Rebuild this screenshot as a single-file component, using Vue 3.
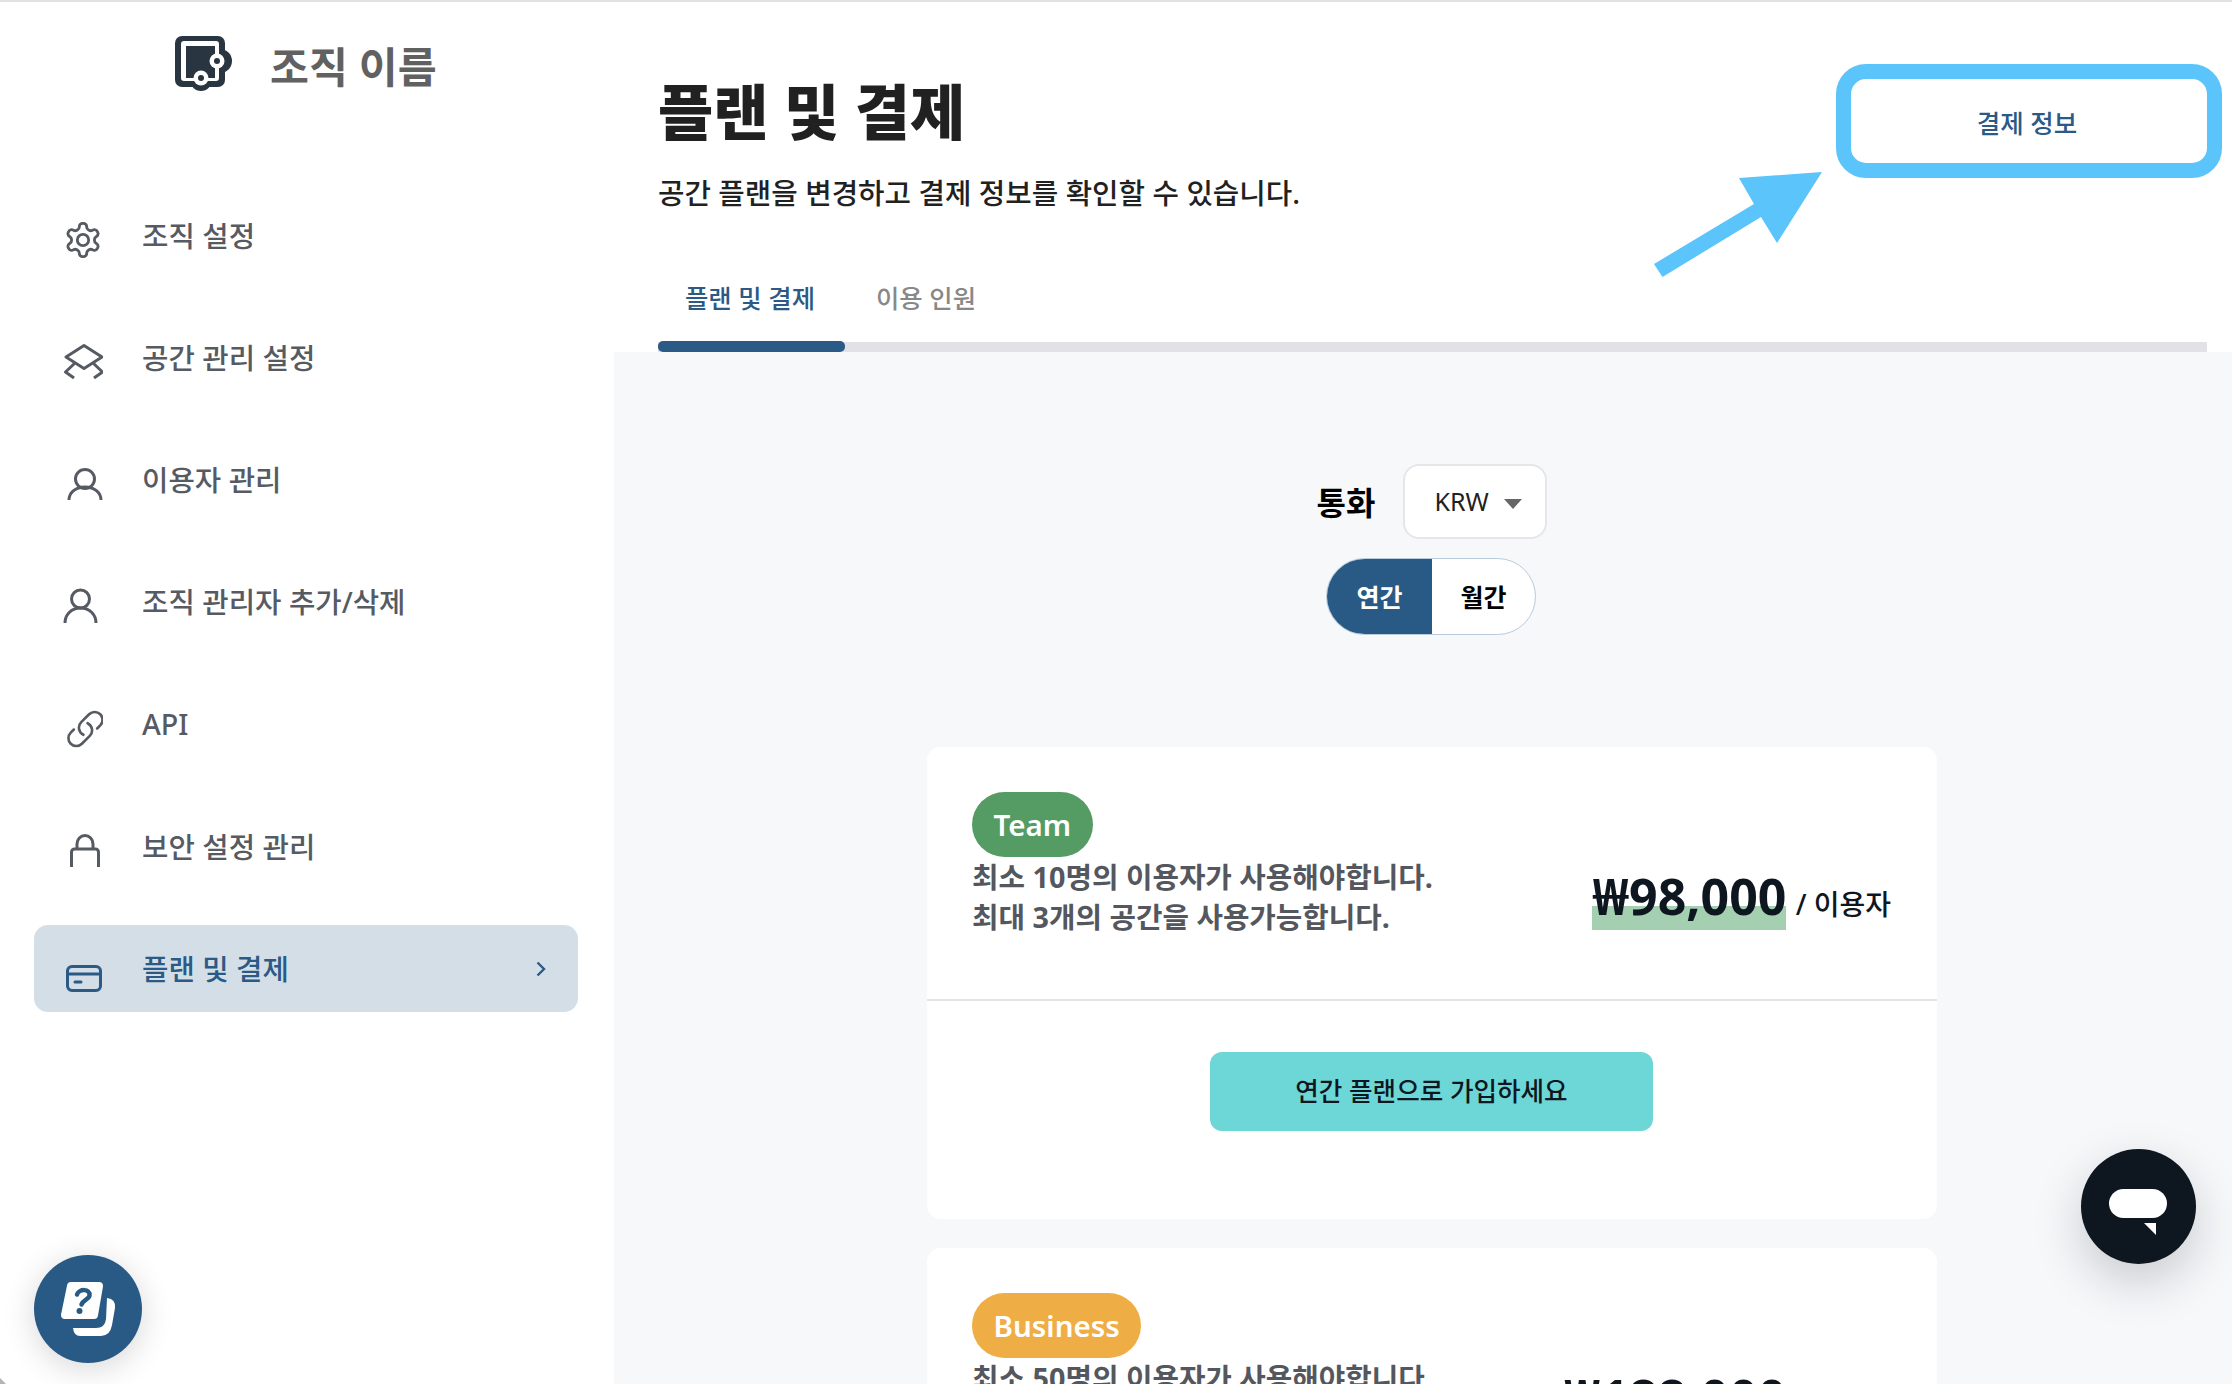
<template>
  <div class="page">
    <aside class="sidebar">
      <div class="org">
        <svg class="org-logo" width="60" height="58" viewBox="0 0 60 58">
          <rect x="1" y="1" width="50" height="51" rx="7" fill="#2a3542" />
          <circle cx="46" cy="26" r="12" fill="#2a3542" />
          <circle cx="27" cy="45" r="11" fill="#2a3542" />
          <rect x="7" y="6" width="38" height="40" rx="3" fill="#fff" />
          <rect x="12" y="11" width="29" height="32" fill="#2a3542" />
          <circle cx="43" cy="26" r="7.500" fill="#fff" />
          <circle cx="43" cy="26" r="3" fill="#2a3542" />
          <circle cx="27" cy="43" r="7.500" fill="#fff" />
          <circle cx="27" cy="43" r="3" fill="#2a3542" />
        </svg>
        <span class="org-name">조직 이름</span>
      </div>

      <nav class="nav">
        <a
          v-for="item in navItems"
          :key="item.label"
          class="nav-item"
          :class="{ active: item.active }"
        >
          <svg class="nav-icon" width="40" height="40" viewBox="0 0 40 40" fill="none" stroke="currentColor" stroke-width="3" stroke-linecap="round" stroke-linejoin="round">
            <g v-if="item.icon === 'gear'" transform="scale(1.667)" stroke-width="1.7">
              <path d="M12.22 2h-.44a2 2 0 0 0-2 2v.18a2 2 0 0 1-1 1.73l-.43.25a2 2 0 0 1-2 0l-.15-.08a2 2 0 0 0-2.73.73l-.22.38a2 2 0 0 0 .73 2.73l.15.1a2 2 0 0 1 1 1.72v.51a2 2 0 0 1-1 1.74l-.15.09a2 2 0 0 0-.73 2.73l.22.38a2 2 0 0 0 2.73.73l.15-.08a2 2 0 0 1 2 0l.43.25a2 2 0 0 1 1 1.73V20a2 2 0 0 0 2 2h.44a2 2 0 0 0 2-2v-.18a2 2 0 0 1 1-1.73l.43-.25a2 2 0 0 1 2 0l.15.08a2 2 0 0 0 2.73-.73l.22-.39a2 2 0 0 0-.73-2.73l-.15-.08a2 2 0 0 1-1-1.74v-.5a2 2 0 0 1 1-1.74l.15-.09a2 2 0 0 0 .73-2.73l-.22-.38a2 2 0 0 0-2.73-.73l-.15.08a2 2 0 0 1-2 0l-.43-.25a2 2 0 0 1-1-1.73V4a2 2 0 0 0-2-2z" />
              <circle cx="12" cy="12" r="3.400" />
            </g>
            <g v-else-if="item.icon === 'layers'">
              <path d="M21 3.500 39 15 21 26.500 3 15Z" />
              <path d="M12 21 2.500 30 11 36M30 21 39.500 30 31 36" stroke-linecap="butt" />
            </g>
            <g v-else-if="item.icon === 'user'" stroke-linecap="butt">
              <circle cx="22" cy="14" r="9.500" />
              <path d="M6 35C6 28 12 22 22 22S38 28 38 35" />
            </g>
            <g v-else-if="item.icon === 'admin'" stroke-linecap="butt">
              <circle cx="17.500" cy="12" r="9" />
              <path d="M2 36C2 28 8 21 17.500 21S33 28 33 36" />
            </g>
            <g v-else-if="item.icon === 'link'" transform="translate(1.500 -1) scale(1.75)" stroke-width="1.500">
              <path d="M13.190 8.688a4.500 4.500 0 0 1 1.242 7.244l-4.500 4.500a4.500 4.500 0 0 1-6.364-6.364l1.757-1.757m13.350-.622 1.757-1.757a4.500 4.500 0 0 0-6.364-6.364l-4.500 4.500a4.500 4.500 0 0 0 1.242 7.244" />
            </g>
            <g v-else-if="item.icon === 'lock'" stroke-linecap="butt">
              <path d="M8.500 36V21a3 3 0 0 1 3-3h21a3 3 0 0 1 3 3v15" />
              <path d="M14 18v-5a8 8.500 0 0 1 16 0v5" />
            </g>
            <g v-else-if="item.icon === 'card'">
              <rect x="4.500" y="12.500" width="33" height="24" rx="4.500" />
              <path d="M4.500 20h33M12 28h6" />
            </g>
          </svg>
          <span class="nav-label">{{ item.label }}</span>
          <svg v-if="item.active" class="nav-chevron" width="10" height="16" viewBox="0 0 10 16" fill="none" stroke="currentColor" stroke-width="2.400">
            <path d="M1.500 1.500 8 8l-6.500 6.500" />
          </svg>
        </a>
      </nav>

      <button type="button" class="help-btn">
        <svg width="108" height="108" viewBox="0 0 108 108">
          <path d="M37 31H65L60 60H31Z" fill="#fff" stroke="#fff" stroke-width="8" stroke-linejoin="round" />
          <path d="M73 43Q82 44 81 53L78 70Q76 81 67 81H46Q40 81 39 73H62Q71 73 72 64Z" fill="#fff" />
          <path d="M43 39.500C45 33.500 56.500 33.500 55.500 40.500C55 44.500 49 44.500 47.500 49.500" fill="none" stroke="#295a85" stroke-width="4.500" stroke-linecap="round" />
          <circle cx="45.500" cy="56" r="3" fill="#295a85" />
        </svg>
      </button>
    </aside>

    <main class="main">
      <header class="main-head">
        <div class="head-row">
          <div class="head-text">
            <h1>플랜 및 결제</h1>
            <p>공간 플랜을 변경하고 결제 정보를 확인할 수 있습니다.</p>
          </div>
          <button type="button" class="billing-btn">결제 정보</button>
          <svg class="pointer-arrow" width="180" height="120" viewBox="0 0 180 120">
            <path d="M172 10 89 16 104 42 4 102 12.500 115 111 55 127 81Z" fill="#5bc4fb" />
          </svg>
        </div>
        <div class="tabs">
          <a class="tab active">플랜 및 결제</a>
          <a class="tab">이용 인원</a>
        </div>
      </header>

      <section class="content">
        <div class="currency-row">
          <span class="currency-label">통화</span>
          <div class="currency-select">
            <span>KRW</span>
            <i class="caret"></i>
          </div>
        </div>
        <div class="period-toggle">
          <span class="period on">연간</span>
          <span class="period">월간</span>
        </div>

        <article v-for="plan in plans" :key="plan.name" class="plan-card">
          <div class="plan-top">
            <div class="plan-info">
              <span class="plan-badge" :class="plan.badgeClass">{{ plan.name }}</span>
              <p>{{ plan.minUsers }}</p>
              <p>{{ plan.spaces }}</p>
            </div>
            <div class="plan-price">
              <span class="amount" :class="plan.badgeClass">{{ plan.price }}</span>
              <span class="per"> / 이용자</span>
            </div>
          </div>
          <div class="plan-bottom">
            <button type="button" class="join-btn">연간 플랜으로 가입하세요</button>
          </div>
        </article>
      </section>
    </main>

    <button type="button" class="chat-btn">
      <svg width="115" height="115" viewBox="0 0 115 115">
        <rect x="28" y="40" width="58" height="29" rx="14.500" fill="#fff" />
        <path d="M63 74H75V86Z" fill="#fff" />
      </svg>
    </button>
  </div>
</template>

<script setup>
const navItems = [
  { label: '조직 설정', icon: 'gear' },
  { label: '공간 관리 설정', icon: 'layers' },
  { label: '이용자 관리', icon: 'user' },
  { label: '조직 관리자 추가/삭제', icon: 'admin' },
  { label: 'API', icon: 'link' },
  { label: '보안 설정 관리', icon: 'lock' },
  { label: '플랜 및 결제', icon: 'card', active: true },
]

const plans = [
  {
    name: 'Team',
    badgeClass: 'team',
    minUsers: '최소 10명의 이용자가 사용해야합니다.',
    spaces: '최대 3개의 공간을 사용가능합니다.',
    price: '₩98,000',
  },
  {
    name: 'Business',
    badgeClass: 'business',
    minUsers: '최소 50명의 이용자가 사용해야합니다.',
    spaces: '최대 10개의 공간을 사용가능합니다.',
    price: '₩188,000',
  },
]
</script>

<style>
html,
body {
  margin: 0;
  background: #fff;
}
</style>

<style scoped>
.page {
  position: relative;
  display: flex;
  width: 2232px;
  height: 1384px;
  overflow: hidden;
  box-sizing: border-box;
  border-top: 2px solid #e2e2e2;
  background: #fff;
  font-family: "Noto Sans", "Noto Sans CJK KR", sans-serif;
}

.page::after {
  content: "";
  position: absolute;
  left: 0;
  bottom: 0;
  width: 0;
  height: 0;
  border-left: 6px solid #b4b4b4;
  border-top: 6px solid transparent;
}

.sidebar {
  position: relative;
  flex: 0 0 614px;
  box-sizing: border-box;
  padding: 0 36px 0 34px;
}

.org {
  display: flex;
  align-items: center;
  gap: 36px;
  height: 56px;
  margin-top: 34px;
  padding-left: 140px;
}

.org-name {
  font-size: 42.300px;
  font-weight: 700;
  color: #616161;
}

.nav {
  display: flex;
  flex-direction: column;
  gap: 35.300px;
  margin-top: 99.500px;
}

.nav-item {
  display: flex;
  align-items: center;
  height: 87px;
  box-sizing: border-box;
  padding: 0 32px 0 29px;
  border-radius: 14px;
  color: #565a62;
}

.nav-item.active {
  background: #d4dee7;
  color: #2a5a85;
}

.nav-icon {
  flex: none;
  margin-top: 10px;
  margin-right: 39px;
}

.nav-label {
  flex: 1;
  margin-top: -2px;
  font-size: 28.700px;
  font-weight: 500;
}

.help-btn {
  position: absolute;
  left: 34px;
  top: 1253px;
  width: 108px;
  height: 108px;
  padding: 0;
  border: 0;
  border-radius: 50%;
  background: #295a85;
  box-shadow: 0 6px 32px rgba(0, 0, 0, 0.16);
}

.help-btn svg {
  display: block;
}

.main {
  flex: 1;
  display: flex;
  flex-direction: column;
  min-width: 0;
}

.main-head {
  padding: 0 25px 0 44px;
}

.head-row {
  position: relative;
  display: flex;
  justify-content: space-between;
  align-items: flex-start;
  height: 265px;
}

h1 {
  margin: 65px 0 0;
  font-size: 60px;
  line-height: 90px;
  font-weight: 900;
  color: #212121;
}

.head-text p {
  margin: 15px 0 0;
  font-size: 28.750px;
  line-height: 42px;
  font-weight: 500;
  color: #212121;
}

.billing-btn {
  width: 386px;
  height: 114px;
  margin: 62px -15px 0 0;
  padding: 0 4px 0 0;
  border: 15px solid #5bc4fb;
  border-radius: 30px;
  background: #fff;
  font-family: inherit;
  font-size: 25.500px;
  font-weight: 500;
  color: #2a5a85;
}

.pointer-arrow {
  position: absolute;
  right: 377px;
  top: 160px;
}

.tabs {
  display: flex;
  height: 85px;
  align-items: flex-start;
  gap: 61px;
  padding: 9px 0 0 27px;
  box-sizing: border-box;
  border-bottom: 10px solid #e2e2e6;
  position: relative;
}

.tab {
  font-size: 25.400px;
  line-height: 44px;
  font-weight: 500;
  color: #888;
}

.tab.active {
  color: #2a5a85;
}

.tab.active::after {
  content: "";
  position: absolute;
  left: 0;
  bottom: -10px;
  width: 187px;
  height: 11px;
  border-radius: 5px;
  background: #2a5a85;
}

.content {
  flex: 1;
  background: #f7f8fa;
  display: flex;
  flex-direction: column;
  align-items: center;
  padding: 112px 0 0 18px;
}

.currency-row {
  display: flex;
  align-items: center;
  gap: 28px;
}

.currency-label {
  padding-bottom: 2px;
  font-size: 32px;
  font-weight: 700;
  color: #000;
}

.currency-select {
  display: flex;
  align-items: center;
  justify-content: space-between;
  width: 144px;
  height: 75px;
  box-sizing: border-box;
  padding: 0 23px 2px 29px;
  border: 2px solid #e6e6ea;
  border-radius: 16px;
  background: #fff;
  font-size: 25px;
  color: #212121;
}

.caret {
  width: 0;
  height: 0;
  border-left: 9px solid transparent;
  border-right: 9px solid transparent;
  border-top: 10px solid #666;
  margin-top: 6px;
}

.period-toggle {
  display: flex;
  width: 210px;
  height: 77px;
  margin: 19px 2px 0 0;
  box-sizing: border-box;
  border: 1.500px solid #b8cbdd;
  border-radius: 39px;
  background: #fff;
  overflow: hidden;
}

.period {
  flex: 1;
  display: flex;
  align-items: center;
  justify-content: center;
  padding-bottom: 2px;
  font-size: 25px;
  font-weight: 600;
  color: #000;
}

.period.on {
  flex: 0 0 105px;
  background: #295a85;
  color: #fff;
}

.plan-card {
  flex: none;
  width: 1010px;
  height: 472px;
  margin-top: 112px;
  border-radius: 14px;
  background: #fff;
}

.plan-card + .plan-card {
  margin-top: 29px;
}

.plan-top {
  display: flex;
  justify-content: space-between;
  height: 254px;
  box-sizing: border-box;
  padding: 45px 46px 0 45px;
  border-bottom: 2px solid #e4e4e8;
}

.plan-info p {
  margin: 0;
  font-size: 28.800px;
  line-height: 40px;
  font-weight: 700;
  color: #54575e;
}

.plan-badge {
  display: block;
  width: fit-content;
  height: 65px;
  padding: 0 21.500px;
  box-sizing: border-box;
  border-radius: 33px;
  font-size: 29.500px;
  font-weight: 600;
  line-height: 66px;
  color: #fff;
}

.plan-badge.team {
  background: #549c63;
}

.plan-badge.business {
  background: #efad46;
}

.plan-price {
  display: flex;
  align-items: baseline;
  height: 68px;
  margin-top: 70px;
}

.amount {
  font-size: 50px;
  font-weight: 700;
  line-height: 68px;
  color: #0e1620;
}

.amount.team {
  background: linear-gradient(transparent 44px, #a4cfb0 44px);
}

.amount.business {
  background: linear-gradient(transparent 44px, #f7d6a2 44px);
}

.per {
  white-space: pre;
  margin-left: 2px;
  font-size: 28px;
  font-weight: 500;
  color: #0e1620;
}

.plan-bottom {
  display: flex;
  justify-content: center;
  padding-top: 51px;
}

.join-btn {
  width: 443px;
  height: 79px;
  margin-right: 1px;
  padding: 0 0 3px;
  border: 0;
  border-radius: 12px;
  background: #6dd6d6;
  font-family: inherit;
  font-size: 25.600px;
  font-weight: 500;
  color: #0e1620;
}

.chat-btn {
  position: absolute;
  left: 2081px;
  top: 1147px;
  width: 115px;
  height: 115px;
  padding: 0;
  border: 0;
  border-radius: 50%;
  background: #0e1620;
  box-shadow: 0 18px 50px rgba(14, 22, 32, 0.2);
}

.chat-btn svg {
  display: block;
}
</style>
